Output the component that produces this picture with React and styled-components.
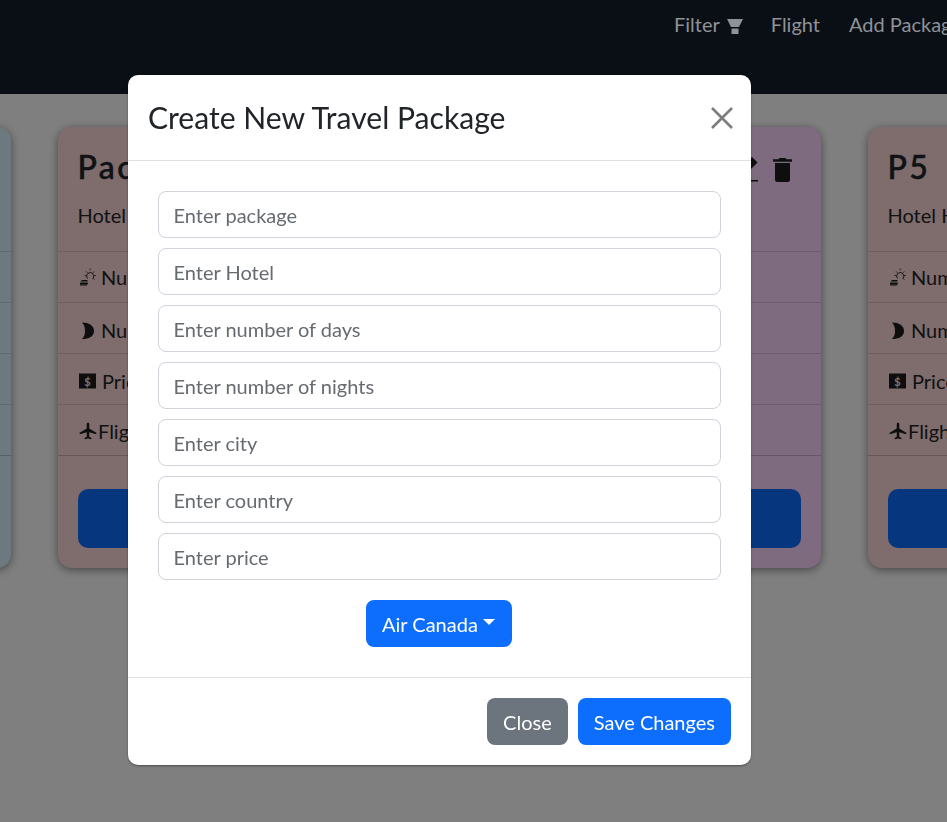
import React from "react";
import styled, { createGlobalStyle } from "styled-components";
import { MdLocalAirport } from "react-icons/md";

const GlobalStyle = createGlobalStyle`
  html, body {
    margin: 0;
    height: 100%;
    overflow: hidden;
    background: #fff;
    font-family: Lato, "Liberation Sans", sans-serif;
    font-size: 20px;
    color: #212529;
  }
  * { box-sizing: border-box; }
`;

const packages = [
  { title: "P1", hotel: "Hotel Hilton", tint: "#d8f4fe" },
  { title: "Package 2", hotel: "Hotel Hilton", tint: "#ffd8d8" },
  { title: "P3", hotel: "Hotel Hilton", tint: "#fed6fe", actions: true },
  { title: "P5", hotel: "Hotel Hilton", tint: "#ffd8d8" },
];

const fields = [
  "Enter package",
  "Enter Hotel",
  "Enter number of days",
  "Enter number of nights",
  "Enter city",
  "Enter country",
  "Enter price",
];

const FilterIcon = () => (
  <svg width="17" height="16" viewBox="0 0 17 16" fill="currentColor">
    <path d="M1 0h16l-4 8H5z" />
    <path d="M5.5 9.5h7V15h-7z" />
  </svg>
);

const HazeIcon = () => (
  <svg width="18" height="20" viewBox="0 0 18 20" fill="none" stroke="currentColor">
    <path d="M9.5 11.5a3.6 3.6 0 1 1 5.5 0" strokeWidth="0.9" />
    <path d="M12.2 1.5v2M17.8 8.5h-2M16.3 4.4l-1.4 1.4M8.1 4.4l1.4 1.4M16.3 12.6l-1.4-1.4M6.6 8.5h1.6" strokeWidth="0.8" />
    <path d="M3.5 13.5h6M2.5 15h7M2 16.6h8M2 18h7" strokeWidth="1.2" />
  </svg>
);

const MoonIcon = () => (
  <svg width="18" height="18" viewBox="0 0 18 18" fill="currentColor">
    <path d="M4 1.5C11 1.5 16 4.5 16 10S11 18 4 18C6.5 15.5 7 13 7 10S6.5 4 4 1.5z" />
  </svg>
);

const PriceIcon = () => (
  <svg width="19" height="16" viewBox="0 0 19 16">
    <rect x="1" y="0.5" width="17" height="15" fill="currentColor" />
    <text x="9.5" y="12.5" fontSize="11" fontWeight="700" textAnchor="middle" fill="#f0e4e4">$</text>
  </svg>
);

const EditIcon = () => (
  <svg width="26" height="26" viewBox="0 0 26 26" fill="currentColor">
    <path d="M20 0l5.5 5.5L10 21H4v-6z" />
    <path d="M0 23h26v1.6H0z" />
  </svg>
);

const TrashIcon = () => (
  <svg width="19" height="24" viewBox="0 0 19 24" fill="currentColor">
    <path d="M6.5 0h6l1 1.2H19v2.6H0V1.2h5.5z" />
    <path d="M2 5h15v16.5a2.5 2.5 0 0 1-2.5 2.5h-10A2.5 2.5 0 0 1 2 21.5z" />
  </svg>
);

const PackageCard = ({ title, hotel, tint, actions }) => (
  <Card $tint={tint}>
    <CardHead>
      <TitleRow>
        <CardTitle>{title}</CardTitle>
        {actions && (
          <Actions>
            <EditIcon />
            <TrashIcon />
          </Actions>
        )}
      </TitleRow>
      <CardText>{hotel}</CardText>
    </CardHead>
    <InfoRow><HazeIcon /> Number of days</InfoRow>
    <InfoRow $drop={4}><MoonIcon /> Number of nights</InfoRow>
    <InfoRow $drop={3}><PriceIcon /> Price</InfoRow>
    <InfoRow $drop={2} $tight><MdLocalAirport size={20} />Flight</InfoRow>
    <CardFoot>
      <BookButton />
    </CardFoot>
  </Card>
);

const App = () => (
  <>
    <GlobalStyle />
    <Nav>
      <NavLink>Filter <FilterIcon /></NavLink>
      <NavLink>Flight</NavLink>
      <NavLink>Add Package</NavLink>
    </Nav>
    <CardRow>
      {packages.map((p) => (
        <PackageCard key={p.title} {...p} />
      ))}
    </CardRow>
    <Backdrop />
    <ModalLayer>
      <Modal>
        <ModalHeader>
          <ModalTitle>Create New Travel Package</ModalTitle>
          <CloseX aria-label="Close">
            <svg width="22" height="22" viewBox="0 0 22 22" stroke="currentColor" strokeWidth="2.6">
              <path d="M1 1l20 20M21 1L1 21" />
            </svg>
          </CloseX>
        </ModalHeader>
        <ModalBody>
          {fields.map((f) => (
            <Field key={f} placeholder={f} />
          ))}
          <DropdownWrap>
            <Button $color="#0d6efd" $wide>Air Canada<Caret /></Button>
          </DropdownWrap>
        </ModalBody>
        <ModalFooter>
          <Button $color="#6c757d">Close</Button>
          <Button $color="#0d6efd">Save Changes</Button>
        </ModalFooter>
      </Modal>
    </ModalLayer>
  </>
);

const Nav = styled.nav`
  position: relative;
  z-index: 2;
  height: 94px;
  background: #0a0f16;
  display: flex;
  gap: 29px;
  padding: 11px 0 0 674px;
  white-space: nowrap;
`;

const NavLink = styled.a`
  display: flex;
  align-items: center;
  gap: 6px;
  height: 26px;
  color: #8f9296;

  svg {
    margin: 5px -1px 0 0;
  }
`;

const CardRow = styled.div`
  display: flex;
  gap: 47px;
  margin: 33px 0 0 -347px;
`;

const Card = styled.div`
  flex: 0 0 358px;
  background: ${(p) => p.$tint};
  border-radius: 14px;
  box-shadow: 0 2px 10px rgba(0, 0, 0, 0.45);
  overflow: hidden;
`;

const CardHead = styled.div`
  height: 124px;
  padding: 20px 20px 0 19.5px;
`;

const TitleRow = styled.div`
  display: flex;
  justify-content: space-between;
  align-items: center;
`;

const CardTitle = styled.div`
  font-size: 32px;
  font-weight: 500;
  letter-spacing: 2.4px;
  line-height: 40px;
  -webkit-text-stroke: 0.5px #212529;
`;

const Actions = styled.div`
  display: flex;
  align-items: center;
  gap: 15px;
  margin: 5px 9px 0 0;
  color: #1c1c1c;
`;

const CardText = styled.div`
  margin-top: 16px;
  line-height: 24px;
`;

const InfoRow = styled.div`
  height: 51px;
  padding: ${(p) => p.$drop || 0}px 20px 0;
  display: flex;
  align-items: center;
  gap: ${(p) => (p.$tight ? "0" : "5px")};
  border-top: 1px solid rgba(0, 0, 0, 0.13);
  white-space: nowrap;

  svg {
    flex-shrink: 0;
    color: #1c1c1c;
  }
`;

const CardFoot = styled.div`
  padding: 33px 20px 20px;
  border-top: 1px solid rgba(0, 0, 0, 0.2);
`;

const BookButton = styled.div`
  height: 59px;
  border-radius: 10px;
  background: #0d6efd;
`;

const Backdrop = styled.div`
  position: fixed;
  inset: 0;
  z-index: 1;
  background: rgba(0, 0, 0, 0.5);
`;

const ModalLayer = styled.div`
  position: fixed;
  inset: 0;
  z-index: 3;
  padding: 75px 0 0 128px;
`;

const Modal = styled.div`
  width: 623px;
  background: #fff;
  border-radius: 10px;
  box-shadow: 0 1px 2px rgba(0, 0, 0, 0.4);
`;

const ModalHeader = styled.div`
  height: 86px;
  padding: 0 18px 2px 20px;
  display: flex;
  align-items: center;
  justify-content: space-between;
  border-bottom: 1px solid #dee2e6;
`;

const ModalTitle = styled.h4`
  margin: 0;
  font-size: 30.1px;
  font-weight: 400;
  color: #212529;
`;

const CloseX = styled.button`
  display: flex;
  margin-top: 2px;
  padding: 0;
  border: 0;
  background: none;
  color: #7d7d7d;
`;

const ModalBody = styled.div`
  padding: 30px;
  display: flex;
  flex-direction: column;
  gap: 10px;
`;

const Field = styled.input`
  height: 47px;
  padding: 0 14.5px;
  border: 1px solid #ced4da;
  border-radius: 8px;
  font: inherit;
  font-size: 20px;
  outline: none;

  &::placeholder {
    color: #666b70;
    opacity: 1;
  }
`;

const DropdownWrap = styled.div`
  display: flex;
  justify-content: center;
  margin: 10px 1px 0 0;
`;

const Button = styled.button`
  height: 47px;
  padding: 0 16px;
  min-width: ${(p) => (p.$wide ? "146px" : "0")};
  display: inline-flex;
  align-items: center;
  border: 0;
  border-radius: 8px;
  background: ${(p) => p.$color};
  color: #fff;
  font: inherit;
  font-size: 20px;
`;

const Caret = styled.span`
  margin: 0 0 4px 5px;
  border-top: 6px solid #fff;
  border-left: 6px solid transparent;
  border-right: 6px solid transparent;
`;

const ModalFooter = styled.div`
  padding: 20px;
  display: flex;
  justify-content: flex-end;
  gap: 10px;
  border-top: 1px solid #dee2e6;
`;

export default App;
